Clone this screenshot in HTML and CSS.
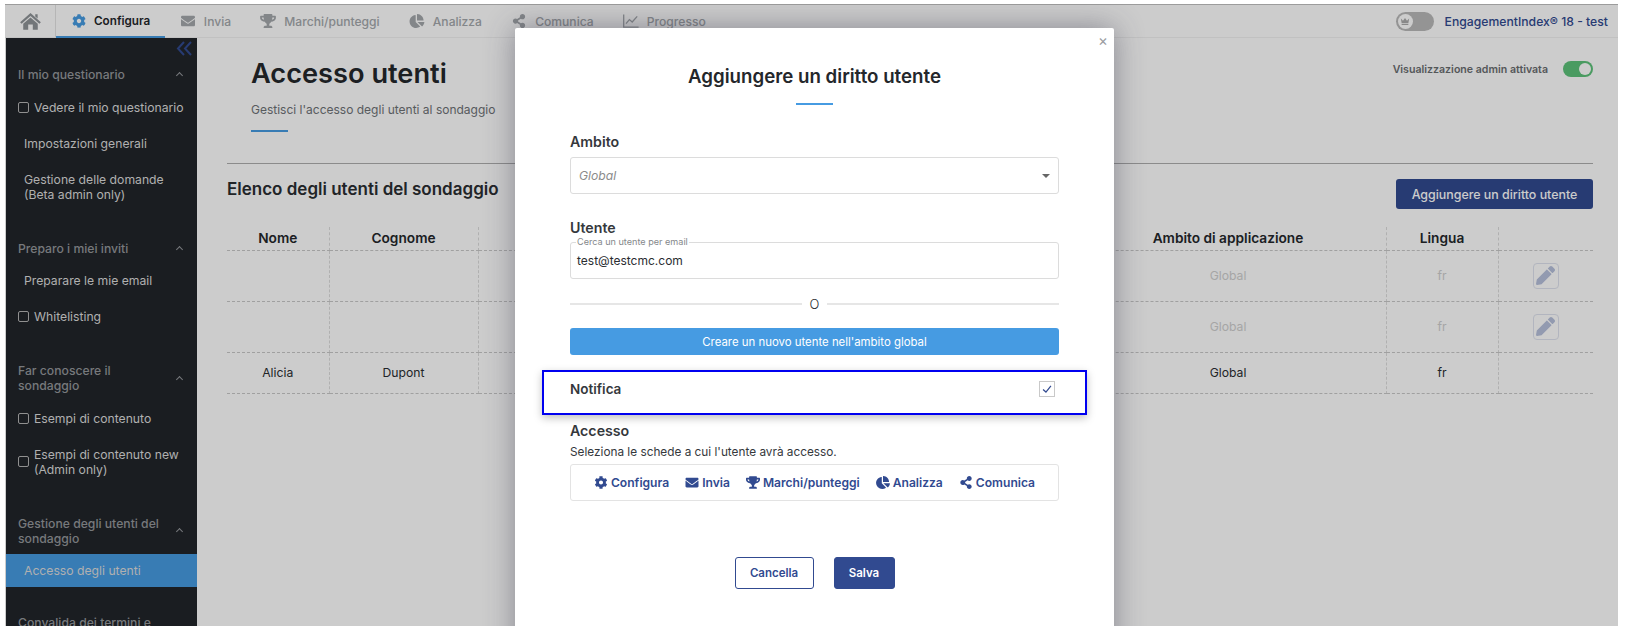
FILE: index.html
```html
<!DOCTYPE html>
<html lang="it">
<head>
  <meta charset="UTF-8" />
  <meta name="viewport" content="width=device-width, initial-scale=1.0" />
  <title>Accesso utenti</title>
  <link rel="stylesheet" href="styles.css">
</head>
<body>

  <svg class="sprite" xmlns="http://www.w3.org/2000/svg">
    <symbol id="i-home" viewBox="0 0 576 500"><path d="M288 30 576 285 535 325 288 108 41 325 0 285zM420 62h66v120l-66-58zM288 150 490 328V490H352V350H224V490H86V328z"/></symbol>
    <symbol id="i-cog" viewBox="0 0 512 512"><path d="M487.4 315.7l-42.6-24.6c4.3-23.2 4.3-47 0-70.2l42.6-24.6c4.9-2.8 7.1-8.6 5.500-14-11.1-35.6-30-67.8-54.7-94.6-3.8-4.1-10-5.1-14.8-2.3L380.8 110c-17.9-15.4-38.5-27.3-60.8-35.1V25.8c0-5.6-3.9-10.5-9.4-11.7-36.7-8.2-74.3-7.8-109.2 0-5.5 1.2-9.4 6.1-9.4 11.7V75c-22.2 7.9-42.8 19.8-60.8 35.1L88.7 85.5c-4.9-2.8-11-1.9-14.8 2.3-24.7 26.7-43.6 58.9-54.7 94.6-1.7 5.4.6 11.2 5.5 14L67.3 221c-4.3 23.2-4.3 47 0 70.2l-42.6 24.6c-4.9 2.8-7.1 8.6-5.5 14 11.1 35.6 30 67.8 54.7 94.6 3.8 4.1 10 5.1 14.8 2.3l42.6-24.6c17.9 15.4 38.5 27.3 60.8 35.1v49.2c0 5.6 3.9 10.5 9.4 11.7 36.7 8.2 74.3 7.8 109.2 0 5.5-1.2 9.4-6.1 9.4-11.7v-49.2c22.2-7.9 42.8-19.8 60.8-35.1l42.6 24.6c4.9 2.8 11 1.9 14.8-2.3 24.7-26.7 43.6-58.9 54.7-94.6 1.5-5.5-.7-11.3-5.6-14.1zM256 336c-44.1 0-80-35.9-80-80s35.9-80 80-80 80 35.9 80 80-35.9 80-80 80z"/></symbol>
    <symbol id="i-mail" viewBox="0 0 512 512"><path d="M502.3 190.8c3.9-3.1 9.7-.2 9.7 4.7V400c0 26.5-21.5 48-48 48H48c-26.5 0-48-21.5-48-48V195.6c0-5 5.7-7.8 9.7-4.7 22.4 17.4 52.1 39.5 154.1 113.6 21.1 15.4 56.7 47.8 92.2 47.6 35.7.3 72-32.8 92.3-47.6 102-74.1 131.6-96.3 154-113.7zM256 320c23.2.4 56.6-29.2 73.4-41.4 132.7-96.3 142.8-104.7 173.4-128.7 5.8-4.5 9.2-11.5 9.2-18.9v-19c0-26.5-21.5-48-48-48H48C21.5 64 0 85.5 0 112v19c0 7.4 3.4 14.3 9.2 18.9 30.6 23.9 40.7 32.4 173.4 128.7 16.8 12.2 50.2 41.8 73.4 41.4z"/></symbol>
    <symbol id="i-trophy" viewBox="0 0 576 512"><path d="M552 64H448V24c0-13.3-10.7-24-24-24H152c-13.3 0-24 10.7-24 24v40H24C10.7 64 0 74.7 0 88v56c0 35.7 22.5 72.4 61.9 100.7 31.5 22.7 69.8 37.1 110 41.7C203.3 338.5 240 360 240 360v72h-48c-35.3 0-64 20.7-64 56v12c0 6.6 5.4 12 12 12h296c6.6 0 12-5.4 12-12v-12c0-35.3-28.7-56-64-56h-48v-72s36.7-21.5 68.1-73.6c40.3-4.6 78.7-19 110-41.7 39.3-28.3 61.9-65 61.9-100.7V88c0-13.3-10.7-24-24-24zM99.3 192.8C74.9 175.2 64 155.6 64 144v-16h64.2c1 32.6 5.8 61.2 12.8 86.2-15.1-5.2-29.2-12.4-41.7-21.4zM512 144c0 16.1-17.7 36.1-35.3 48.8-12.5 9-26.7 16.2-41.8 21.4 7-25 11.8-53.6 12.8-86.2H512v16z"/></symbol>
    <symbol id="i-pie" viewBox="0 0 544 512"><path d="M527.79 288H290.5l158.03 158.03c6.04 6.04 15.98 6.53 22.19.68 38.7-36.46 65.32-85.61 73.13-140.86 1.34-9.46-6.51-17.85-16.06-17.85zm-15.83-64.8C503.72 103.74 408.26 8.28 288.8.04 279.68-.59 272 7.1 272 16.24V240h223.77c9.14 0 16.82-7.68 16.19-16.8zM224 288V50.71c0-9.55-8.39-17.4-17.84-16.06C86.99 51.49-4.1 155.6.14 280.37 4.5 408.51 114.83 513.59 243.03 511.98c50.4-.63 96.97-16.87 135.26-44.03 7.9-5.6 8.42-17.23 1.57-24.08L224 288z"/></symbol>
    <symbol id="i-share" viewBox="0 0 448 512"><path d="M352 320c-22.608 0-43.387 7.819-59.79 20.895l-102.486-64.054a96.551 96.551 0 0 0 0-41.683l102.486-64.054C308.613 184.181 329.392 192 352 192c53.019 0 96-42.981 96-96S405.019 0 352 0s-96 42.981-96 96c0 7.158.79 14.13 2.276 20.841L155.79 180.895C139.387 167.819 118.608 160 96 160c-53.019 0-96 42.981-96 96s42.981 96 96 96c22.608 0 43.387-7.819 59.79-20.895l102.486 64.054A96.301 96.301 0 0 0 256 416c0 53.019 42.981 96 96 96s96-42.981 96-96-42.981-96-96-96z"/></symbol>
    <symbol id="i-line" viewBox="0 0 16 14"><path d="M.7 .5V13.2H15.6M3 9.6 6.4 5.6 9.2 8 14.2 2.4" fill="none" stroke="currentColor" stroke-width="1.3"/></symbol>
    <symbol id="i-pencil" viewBox="0 0 512 512"><path d="M497.9 142.1l-46.1 46.1c-4.7 4.7-12.3 4.7-17 0l-111-111c-4.7-4.7-4.7-12.3 0-17l46.1-46.1c18.7-18.7 49.1-18.7 67.9 0l60.1 60.1c18.8 18.7 18.8 49.1 0 67.9zM284.2 99.8L21.6 362.4.4 483.9c-2.9 16.4 11.4 30.6 27.8 27.8l121.5-21.3 262.6-262.6c4.7-4.7 4.7-12.3 0-17l-111-111c-4.8-4.7-12.4-4.7-17.1 0z"/></symbol>
  </svg>

  <div class="frame">

    <!-- TOP NAV -->
    <header class="topnav">
      <a class="nav-home"><svg class="ico"><use href="#i-home"/></svg></a>
      <a class="nav-tab active"><svg class="ico"><use href="#i-cog"/></svg>Configura</a>
      <a class="nav-tab"><svg class="ico"><use href="#i-mail"/></svg>Invia</a>
      <a class="nav-tab"><svg class="ico"><use href="#i-trophy"/></svg>Marchi/punteggi</a>
      <a class="nav-tab"><svg class="ico"><use href="#i-pie"/></svg>Analizza</a>
      <a class="nav-tab"><svg class="ico"><use href="#i-share"/></svg>Comunica</a>
      <a class="nav-tab"><svg class="ico"><use href="#i-line"/></svg>Progresso</a>
      <div class="nav-right">
        <span class="crown-toggle">
          <span class="crown-knob">
            <svg viewBox="0 0 12 10"><path d="M1 1.5 3.6 4 6 .8 8.4 4 11 1.5 10 7H2zM2 8h8v1.2H2z"/></svg>
          </span>
        </span>
        <span class="survey-name">EngagementIndex® 18 - test</span>
      </div>
    </header>

    <div class="layout">

      <!-- SIDEBAR -->
      <aside class="sidebar">
        <div class="collapse">
          <svg viewBox="0 0 17 15"><path d="M8 1 2 7.500 8 14M15 1 9 7.500 15 14" fill="none" stroke="currentColor" stroke-width="2"/></svg>
        </div>

        <div class="side-group">
          <div class="side-head"><span>Il mio questionario</span><i class="chev"></i></div>
          <div class="side-item check"><i class="box"></i><span>Vedere il mio questionario</span></div>
          <div class="side-item">Impostazioni generali</div>
          <div class="side-item">Gestione delle domande<br>(Beta admin only)</div>
        </div>

        <div class="side-group">
          <div class="side-head"><span>Preparo i miei inviti</span><i class="chev"></i></div>
          <div class="side-item">Preparare le mie email</div>
          <div class="side-item check"><i class="box"></i><span>Whitelisting</span></div>
        </div>

        <div class="side-group">
          <div class="side-head"><span>Far conoscere il<br>sondaggio</span><i class="chev"></i></div>
          <div class="side-item check"><i class="box"></i><span>Esempi di contenuto</span></div>
          <div class="side-item check"><i class="box"></i><span>Esempi di contenuto new<br>(Admin only)</span></div>
        </div>

        <div class="side-group">
          <div class="side-head"><span>Gestione degli utenti del<br>sondaggio</span><i class="chev"></i></div>
          <div class="side-item selected">Accesso degli utenti</div>
        </div>

        <div class="side-group">
          <div class="side-head"><span>Convalida dei termini e</span></div>
        </div>
      </aside>

      <!-- MAIN -->
      <main class="main">
        <div class="page-head">
          <div>
            <h1>Accesso utenti</h1>
            <p class="subtitle">Gestisci l'accesso degli utenti al sondaggio</p>
            <div class="rule"></div>
          </div>
          <div class="admin-view">
            <span>Visualizzazione admin attivata</span>
            <span class="switch"></span>
          </div>
        </div>

        <div class="list-head">
          <h2>Elenco degli utenti del sondaggio</h2>
          <button class="btn-add">Aggiungere un diritto utente</button>
        </div>

        <table class="users">
          <colgroup>
            <col class="c-nome"><col class="c-cognome"><col><col class="c-ambito"><col class="c-lingua"><col class="c-edit">
          </colgroup>
          <thead>
            <tr><th>Nome</th><th>Cognome</th><th></th><th>Ambito di applicazione</th><th>Lingua</th><th></th></tr>
          </thead>
          <tbody>
            <tr class="faded">
              <td></td><td></td><td></td><td>Global</td><td>fr</td>
              <td><span class="edit"><svg class="ico"><use href="#i-pencil"/></svg></span></td>
            </tr>
            <tr class="faded">
              <td></td><td></td><td></td><td>Global</td><td>fr</td>
              <td><span class="edit"><svg class="ico"><use href="#i-pencil"/></svg></span></td>
            </tr>
            <tr class="last">
              <td>Alicia</td><td>Dupont</td><td></td><td>Global</td><td>fr</td><td></td>
            </tr>
          </tbody>
        </table>
      </main>
    </div>

    <!-- MODAL -->
    <div class="backdrop">
      <div class="modal">
        <span class="close">×</span>
        <h3 class="modal-title">Aggiungere un diritto utente</h3>
        <div class="modal-rule"></div>

        <label class="f-label f-ambito">Ambito</label>
        <div class="select">
          <em>Global</em>
          <i class="caret"></i>
        </div>

        <label class="f-label f-utente">Utente</label>
        <div class="outlined">
          <span class="legend">Cerca un utente per email</span>
          test@testcmc.com
        </div>

        <div class="or"><span>O</span></div>

        <button class="btn-new">Creare un nuovo utente nell'ambito global</button>

        <div class="notify">
          <span>Notifica</span>
          <span class="tick">
            <svg viewBox="0 0 16 16"><path d="M3.500 8.500 6.800 11.500 12.500 4.500" fill="none" stroke="currentColor" stroke-width="1.400"/></svg>
          </span>
        </div>

        <label class="f-label f-accesso">Accesso</label>
        <p class="hint">Seleziona le schede a cui l'utente avrà accesso.</p>
        <div class="tabs">
          <span><svg class="ico"><use href="#i-cog"/></svg>Configura</span>
          <span><svg class="ico"><use href="#i-mail"/></svg>Invia</span>
          <span><svg class="ico"><use href="#i-trophy"/></svg>Marchi/punteggi</span>
          <span><svg class="ico"><use href="#i-pie"/></svg>Analizza</span>
          <span><svg class="ico"><use href="#i-share"/></svg>Comunica</span>
        </div>

        <div class="actions">
          <button class="btn-cancel">Cancella</button>
          <button class="btn-save">Salva</button>
        </div>
      </div>
    </div>

  </div>

</body>
</html>
```

FILE: styles.css
```css
* { box-sizing: border-box; }

html, body {
  margin: 0;
  height: 100%;
  background: #fff;
  overflow: hidden;
}

body {
  padding: 4px 10px 6px 5px;
  font-family: Inter, "Open Sans", Arial, sans-serif;
  color: #2a2d31;
}

.sprite { display: none; }

.ico {
  width: 14px;
  height: 14px;
  fill: currentColor;
  flex: none;
}

.frame {
  position: relative;
  height: 622px;
  background: #fff;
  overflow: hidden;
}

/* top nav */
.topnav {
  display: flex;
  align-items: stretch;
  height: 34px;
  border-top: 1px solid #c4c4c4;
  border-bottom: 1px solid #f2f2f2;
  background: #fff;
}

.nav-home {
  width: 51px;
  display: flex;
  align-items: center;
  justify-content: center;
  border-right: 1px solid #e4e4e4;
  color: #8f9498;
}

.nav-home .ico { width: 21px; height: 18px; }

.nav-tab {
  display: flex;
  align-items: center;
  gap: 8px;
  padding: 0 14.600px;
  font-size: 12.100px;
  font-weight: 500;
  color: #a4a8ac;
}

.nav-tab .ico { width: 16px; height: 14px; }

.nav-tab.active {
  color: #24272b;
  gap: 7px;
  padding: 0 15px;
  font-size: 11.700px;
  font-weight: 600;
  border-bottom: 2px solid #469be2;
  margin-bottom: -1px;
}

.nav-tab.active .ico { color: #469be2; }

.nav-right {
  margin-left: auto;
  display: flex;
  align-items: center;
  gap: 11px;
  padding-right: 10px;
}

.crown-toggle {
  width: 38px;
  height: 19px;
  border-radius: 10px;
  background: #b9b9b9;
  padding: 2px;
}

.crown-knob {
  display: flex;
  align-items: center;
  justify-content: center;
  width: 15px;
  height: 15px;
  border-radius: 50%;
  background: #fff;
}

.crown-knob svg { width: 10px; height: 9px; fill: #aaa; }

.survey-name {
  font-size: 12.200px;
  font-weight: 500;
  color: #314a90;
}

/* sidebar */
.layout {
  display: flex;
  height: 588px;
}

.sidebar {
  width: 191px;
  flex: none;
  margin-left: 1px;
  background: #21252a;
  color: #dcdcdc;
  font-size: 12.200px;
  line-height: 15px;
  overflow: hidden;
}

.collapse {
  height: 29px;
  display: flex;
  justify-content: flex-end;
  padding: 3px 4px 0 0;
  color: #314a90;
}

.collapse svg { width: 17px; height: 15px; }

.side-group { margin-bottom: 28.500px; }

.side-head {
  display: flex;
  align-items: center;
  justify-content: space-between;
  padding: 0 13px 7px 12px;
  color: #95989c;
  font-weight: 500;
}

.chev {
  width: 5px;
  height: 5px;
  border-top: 1.500px solid #95989c;
  border-left: 1.500px solid #95989c;
  transform: rotate(45deg);
  margin: 2px 2px 0 0;
}

.side-item {
  padding: 10.500px 8px 10.500px 18px;
}

.side-item.check {
  display: flex;
  align-items: center;
  gap: 5px;
  padding-left: 12px;
}

.box {
  width: 11px;
  height: 11px;
  border: 1px solid #b5b5b5;
  border-radius: 2px;
  flex: none;
}

.side-item.selected {
  background: #469be2;
  margin-top: 1px;
  padding-top: 9px;
  padding-bottom: 9px;
}

/* main */
.main {
  flex: 1;
  padding: 0 25px 0 30px;
}

.page-head {
  display: flex;
  justify-content: space-between;
  height: 126px;
  padding: 0 0 0 24px;
  border-bottom: 1px solid #aeaeae;
}

h1 {
  margin: 19px 0 0;
  font-size: 27.200px;
  line-height: 34px;
  font-weight: 600;
  color: #24272b;
}

.subtitle {
  margin: 11px 0 0;
  font-size: 12px;
  line-height: 15px;
  color: #6e7276;
}

.rule {
  width: 37px;
  height: 2px;
  margin-top: 13px;
  background: #469be2;
}

.admin-view {
  display: flex;
  align-items: center;
  gap: 15px;
  align-self: flex-start;
  margin-top: 23px;
  font-size: 10.600px;
  font-weight: 600;
  color: #6a6d70;
}

.switch {
  position: relative;
  width: 30px;
  height: 16px;
  border-radius: 8px;
  background: #5dc27a;
}

.switch::after {
  content: "";
  position: absolute;
  right: 2px;
  top: 2px;
  width: 12px;
  height: 12px;
  border-radius: 50%;
  background: #fff;
}

.list-head {
  display: flex;
  justify-content: space-between;
  align-items: flex-start;
  height: 63px;
}

h2 {
  margin: 15px 0 0;
  font-size: 17px;
  line-height: 20px;
  font-weight: 600;
  color: #2a2d31;
}

.btn-add {
  margin-top: 15px;
  width: 197px;
  height: 30px;
  border: none;
  border-radius: 3px;
  background: #314a90;
  color: #fff;
  font: 500 12.400px Inter, Arial, sans-serif;
}

/* table */
.users {
  width: 100%;
  border-collapse: collapse;
  table-layout: fixed;
  font-size: 12.200px;
}

.c-nome { width: 102px; }
.c-cognome { width: 149px; }
.c-ambito { width: 316px; }
.c-lingua { width: 112px; }
.c-edit { width: 95px; }

.users th, .users td {
  border-bottom: 1px dashed #c8c8c8;
  border-right: 1px dashed #dcdcdc;
  text-align: center;
  padding: 0;
}

.users th:last-child, .users td:last-child { border-right: none; }

.users th {
  height: 23px;
  font-size: 13.700px;
  font-weight: 600;
  color: #24272b;
}

.users tbody tr { height: 51px; }
.users tbody tr.last { height: 41px; }
.users tr.faded td { color: #cfcfcf; }

.edit {
  display: inline-flex;
  align-items: center;
  justify-content: center;
  width: 26px;
  height: 26px;
  border: 1px solid #dfe3ef;
  border-radius: 4px;
  color: #b7c1dc;
  vertical-align: middle;
}

.edit .ico { width: 19px; height: 19px; }

/* modal */
.backdrop {
  position: absolute;
  inset: 0;
  background: rgba(0, 0, 0, .2);
}

.modal {
  position: absolute;
  left: 510px;
  top: 24px;
  width: 599px;
  height: 640px;
  padding: 0 55px;
  background: #fff;
  border-radius: 2px;
  box-shadow: 0 0 30px rgba(50, 50, 70, .45);
}

.close {
  position: absolute;
  right: 6px;
  top: 4px;
  font-size: 15px;
  line-height: 18px;
  color: #9a9da1;
}

.modal-title {
  margin: 37px 0 0;
  text-align: center;
  font-size: 18.700px;
  line-height: 24px;
  font-weight: 600;
  color: #24272b;
}

.modal-rule {
  width: 37px;
  height: 2px;
  margin: 14px auto 0;
  background: #469be2;
}

.f-label {
  display: block;
  font-size: 14.200px;
  line-height: 18px;
  font-weight: 600;
  color: #35383c;
}

.f-ambito { margin-top: 28px; }
.f-utente { margin-top: 25px; }
.f-accesso { margin-top: 7px; }

.select, .outlined {
  display: flex;
  align-items: center;
  width: 100%;
  height: 37px;
  border: 1px solid #dcdcdc;
  border-radius: 3px;
  font-size: 12px;
  padding: 0 6px;
}

.select {
  margin-top: 6px;
  justify-content: space-between;
  color: #8b8b8b;
  padding-left: 8px;
  font-size: 12.200px;
}

.caret {
  width: 0;
  height: 0;
  border: 4px solid transparent;
  border-top: 4px solid #666;
  border-bottom: none;
  margin-right: 2px;
}

.outlined {
  position: relative;
  margin-top: 5px;
  color: #2a2d31;
}

.legend {
  position: absolute;
  left: 5px;
  top: -6px;
  padding: 0 1px;
  background: #fff;
  font-size: 9.100px;
  line-height: 10px;
  color: #85888b;
}

.or {
  display: flex;
  align-items: center;
  gap: 8px;
  margin-top: 16px;
  font-size: 13px;
  line-height: 18px;
  font-weight: 300;
  color: #2a2d31;
}

.or::before, .or::after {
  content: "";
  flex: 1;
  height: 2px;
  background: #e6e6e6;
}

.btn-new {
  display: block;
  width: 100%;
  height: 27px;
  margin-top: 15px;
  border: none;
  border-radius: 3px;
  background: #469be2;
  color: #fff;
  font: 400 11.400px Inter, Arial, sans-serif;
}

/* highlighted row, wider than the form column */
.notify {
  display: flex;
  justify-content: space-between;
  align-items: flex-start;
  height: 45px;
  margin: 15px -28px 0;
  padding: 8px 30px 0 26px;
  border: 2px solid #0000f0;
  box-shadow: 0 3px 8px rgba(0, 0, 0, .25);
  font-size: 13.500px;
  line-height: 18px;
  font-weight: 600;
  color: #35383c;
}

.tick {
  width: 16px;
  height: 16px;
  border: 1px solid #c9c9c9;
  color: #314a90;
  margin-top: 1px;
}

.tick svg { display: block; width: 14px; height: 14px; }

.hint {
  margin: 4px 0 0;
  font-size: 11.800px;
  line-height: 17px;
  color: #35383c;
}

.tabs {
  display: flex;
  align-items: center;
  justify-content: center;
  gap: 16px;
  height: 37px;
  margin-top: 3px;
  border: 1px solid #e3e3e3;
  border-radius: 3px;
  font-size: 12.100px;
  font-weight: 600;
  color: #314a90;
}

.tabs span {
  display: flex;
  align-items: center;
  gap: 3px;
}

.tabs .ico { width: 14px; height: 13px; }

.actions {
  display: flex;
  justify-content: center;
  gap: 20px;
  margin-top: 56px;
}

.actions button {
  height: 32px;
  border-radius: 3px;
  font: 600 11.500px Inter, Arial, sans-serif;
}

.btn-cancel {
  width: 79px;
  background: #fff;
  border: 1px solid #314a90;
  color: #314a90;
}

.btn-save {
  width: 61px;
  background: #314a90;
  border: 1px solid #314a90;
  color: #fff;
}
```
